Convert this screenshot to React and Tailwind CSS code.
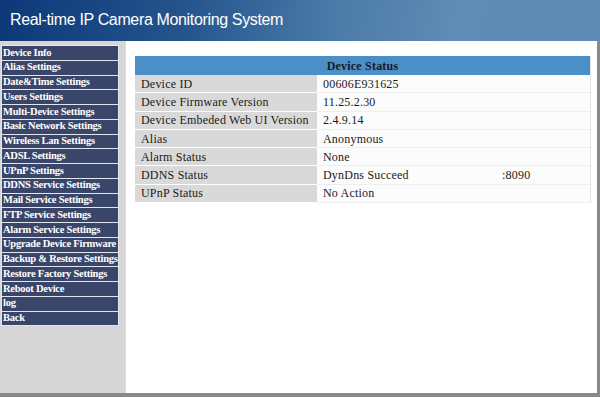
import React from "react";

const menuItems = [
  "Device Info",
  "Alias Settings",
  "Date&Time Settings",
  "Users Settings",
  "Multi-Device Settings",
  "Basic Network Settings",
  "Wireless Lan Settings",
  "ADSL Settings",
  "UPnP Settings",
  "DDNS Service Settings",
  "Mail Service Settings",
  "FTP Service Settings",
  "Alarm Service Settings",
  "Upgrade Device Firmware",
  "Backup & Restore Settings",
  "Restore Factory Settings",
  "Reboot Device",
  "log",
  "Back",
];

const statusRows = [
  { label: "Device ID", value: "00606E931625" },
  { label: "Device Firmware Version", value: "11.25.2.30" },
  { label: "Device Embeded Web UI Version", value: "2.4.9.14" },
  { label: "Alias", value: "Anonymous" },
  { label: "Alarm Status", value: "None" },
  { label: "DDNS Status", value: "DynDns Succeed", extra: ":8090" },
  { label: "UPnP Status", value: "No Action" },
];

const App = () => {
  return (
    <div className="w-[600px] h-[397px] flex flex-col bg-[#8a8a8a] overflow-hidden">
      {/* Title bar */}
      <div className="h-[41px] shrink-0 flex items-center pl-[10px] bg-[linear-gradient(100deg,#0c3878_0%,#24538c_30%,#4a7aa8_55%,#5f8bb4_75%,#5e8ab3_100%)]">
        <h1 className="text-white text-[16px] tracking-[-0.35px] font-['Liberation_Sans',Arial,sans-serif] leading-none -mt-[1px]">
          Real-time IP Camera Monitoring System
        </h1>
      </div>

      <div className="flex h-[352px] shrink-0 mr-[3px]">
        {/* Left menu */}
        <div className="w-[126px] shrink-0 bg-[#d6d6d6] border-r border-[#dcdcdc] pt-[4px] pl-[1px]">
          <ul className="w-[118px] border-t border-[#e8e8ee] font-['Liberation_Serif','Times_New_Roman',serif]">
            {menuItems.map((item) => (
              <li
                key={item}
                className="h-[14.75px] flex items-center pl-[1px] bg-[#3a4669] border-b border-x border-[#e4e6ee] text-white text-[10.5px] tracking-[-0.25px] font-bold leading-none whitespace-nowrap overflow-hidden"
              >
                {item}
              </li>
            ))}
          </ul>
        </div>

        {/* Main content */}
        <div className="flex-1 bg-white pt-[15px] pl-[9px] pr-[6px]">
          <div className="font-['Liberation_Serif','Times_New_Roman',serif] text-[12px] tracking-[0.2px] text-[#1a1a1a] border-r border-[#e2e2e2]">
            <div className="h-[19px] flex items-center justify-center bg-[#4a8fc8] font-bold">
              Device Status
            </div>
            {statusRows.map((row) => (
              <div key={row.label} className="h-[18.3px] flex border-b border-[#eeeeee]">
                <div className="w-[182px] shrink-0 flex items-center pl-[6px] bg-[#d9d9d9] border-b border-white -mb-[1px]">
                  {row.label}
                </div>
                <div className="flex-1 flex items-center pl-[6px] bg-[#fcfcfc]">
                  <span className="w-[179px]">{row.value}</span>
                  {row.extra && <span>{row.extra}</span>}
                </div>
              </div>
            ))}
          </div>
        </div>
      </div>
    </div>
  );
};

export default App;
